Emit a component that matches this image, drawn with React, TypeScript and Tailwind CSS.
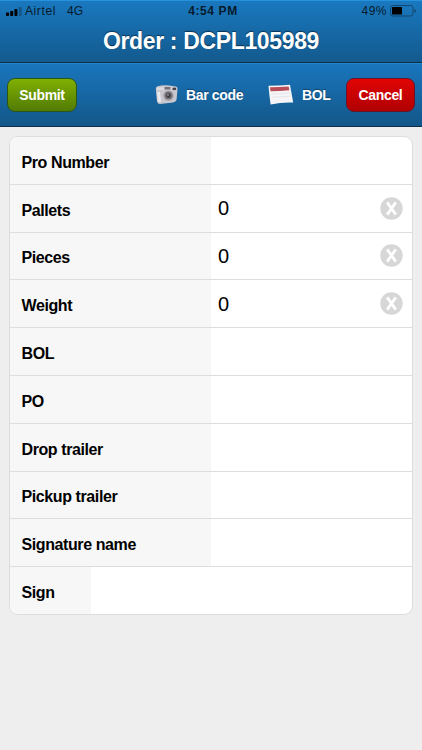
interface Field {
  label: string;
  value?: string;
  narrow?: boolean;
}

const fields: Field[] = [
  { label: 'Pro Number' },
  { label: 'Pallets', value: '0' },
  { label: 'Pieces', value: '0' },
  { label: 'Weight', value: '0' },
  { label: 'BOL' },
  { label: 'PO' },
  { label: 'Drop trailer' },
  { label: 'Pickup trailer' },
  { label: 'Signature name' },
  { label: 'Sign', narrow: true },
];

export default function App() {
  return (
    <div className="w-[422px] h-[750px] overflow-hidden bg-[#eeeeee] font-['Liberation_Sans',sans-serif] text-black">
      <header className="h-[63px] border-t border-t-[#2691dc] border-b border-b-[#0b304b] bg-linear-to-b from-[#1a78bf] to-[#135a8e]">
        <StatusBar />
        <h1 className="h-[38px] text-center text-[23px] leading-[40px] tracking-[-0.35px] font-bold text-white [text-shadow:0_-1px_1px_rgba(0,0,0,0.5)]">
          Order : DCPL105989
        </h1>
      </header>
      <Toolbar />
      <main className="px-[9px] pt-[9px]">
        <div className="h-[479px] rounded-[9px] border border-[#dddddd] bg-white overflow-hidden flex flex-col">
          {fields.map(f => <FieldRow key={f.label} field={f} />)}
        </div>
      </main>
    </div>
  );
}

function StatusBar() {
  return (
    <div className="h-[20px] px-[6px] grid grid-cols-3 items-center text-[12px] text-[#071b2b]">
      <div className="flex items-center">
        <svg width="16" height="9" viewBox="0 0 16 9" className="mr-[3px]">
          <rect x="0" y="5.5" width="3" height="3.5" rx="0.7" fill="#000" />
          <rect x="4.2" y="4" width="3" height="5" rx="0.7" fill="#000" />
          <rect x="8.4" y="2" width="3" height="7" rx="0.7" fill="#000" />
          <rect x="12.8" y="0" width="3" height="9" rx="0.7" fill="#14578a" />
        </svg>
        <span className="tracking-[0.6px]">Airtel</span>
        <span className="ml-[11px]">4G</span>
      </div>
      <div className="pl-[4px] text-center font-bold tracking-[0.6px]">4:54 PM</div>
      <div className="flex items-center justify-end">
        <span className="tracking-[0.5px]">49%</span>
        <svg width="27" height="12" viewBox="0 0 27 12" className="ml-[3px] -mr-[1px]">
          <rect x="0.5" y="0.5" width="22.5" height="10.5" rx="2.3" fill="none" stroke="#10466f" />
          <rect x="2" y="2" width="10" height="7.5" rx="0.6" fill="#000" />
          <path d="M24.5 4v4q1.6-.6 1.6-2t-1.6-2z" fill="#10466f" />
        </svg>
      </div>
    </div>
  );
}

function Toolbar() {
  return (
    <div className="h-[64px] px-[7px] flex items-center border-t border-t-[#2585ca] border-b border-b-[#0b304b] bg-linear-to-b from-[#1a76bd] to-[#135789] text-[14px] tracking-[-0.35px] font-bold text-white [text-shadow:0_-1px_1px_rgba(0,0,0,0.35)]">
      <button className="w-[70px] h-[34px] rounded-[8px] border border-[#2b5519] bg-linear-to-b from-[#80b002] to-[#527b04]">
        Submit
      </button>
      <div className="ml-[78px] w-[90px] flex items-center whitespace-nowrap">
        <CameraIcon />
        <span className="ml-[7px]">Bar code</span>
      </div>
      <div className="ml-[23px] flex items-center">
        <PageIcon />
        <span className="ml-[8px]">BOL</span>
      </div>
      <button className="ml-auto w-[69px] h-[34px] rounded-[8px] border border-[#691426] bg-linear-to-b from-[#e10505] to-[#b00000]">
        Cancel
      </button>
    </div>
  );
}

function FieldRow({ field }: { field: Field }) {
  return (
    <div className="flex-1 min-h-0 flex border-b border-[#dddddd] last:border-b-0">
      <div className={`${field.narrow ? 'w-[81px]' : 'w-[201px]'} pl-[11.5px] pt-[5px] flex items-center bg-[#f7f7f7] text-[16px] tracking-[-0.4px] font-bold whitespace-nowrap`}>
        {field.label}
      </div>
      {field.value && (
        <div className="flex-1 pl-[7px] pr-[9px] flex items-center justify-between text-[20px]">
          <span>{field.value}</span>
          <ClearIcon />
        </div>
      )}
    </div>
  );
}

function ClearIcon() {
  return (
    <svg width="23" height="23" viewBox="0 0 23 23">
      <circle cx="11.5" cy="11.5" r="11.2" fill="#d7d7d7" />
      <path d="M7.2 5.4L15.8 17.6M15.8 5.4L7.2 17.6" stroke="#fff" strokeWidth="2.7" />
    </svg>
  );
}

function CameraIcon() {
  return (
    <svg width="24" height="22" viewBox="0 0 24 22">
      <path d="M2 2.5Q8 .5 14 1.5L21 2.5Q22.8 3 22.5 5.5L21.5 16Q21 18 18 18.4L5 20Q2.6 20 2 17.5L.8 5Q.8 3 2 2.5z" fill="#c9c7cd" />
      <path d="M2 4.8L21.5 4.2" stroke="#dddce1" strokeWidth="2.4" />
      <rect x="9.5" y="3" width="6" height="2.6" fill="#77737a" />
      <rect x="17.5" y="3.6" width="3.6" height="2.4" fill="#46424c" />
      <path d="M3.5 8L4.7 18" stroke="#e9e8ec" strokeWidth="3" />
      <circle cx="13.5" cy="11.6" r="5.2" fill="#aaa7ad" />
      <circle cx="13.5" cy="11.6" r="4" fill="#77737a" />
      <circle cx="13.5" cy="11.6" r="2.3" fill="#3e3b42" />
      <circle cx="13" cy="11" r="0.9" fill="#96939b" />
    </svg>
  );
}

function PageIcon() {
  return (
    <svg width="26" height="22" viewBox="0 0 26 22">
      <path d="M.5 1.8Q11 1.8 22 .8L25.2 18.5Q14 18 2.6 20.5Q1.2 11 .5 1.8z" fill="#f5f4f6" />
      <path d="M2 3.2Q12 3.2 20.6 2.4L21.4 6.2Q12 7 2.5 7.2z" fill="#b94d57" />
      <path d="M3.4 10Q13 9.8 21.8 9M3.9 13.2Q13 12.8 22.3 12.2" stroke="#e2e1e6" strokeWidth="0.8" fill="none" />
    </svg>
  );
}
